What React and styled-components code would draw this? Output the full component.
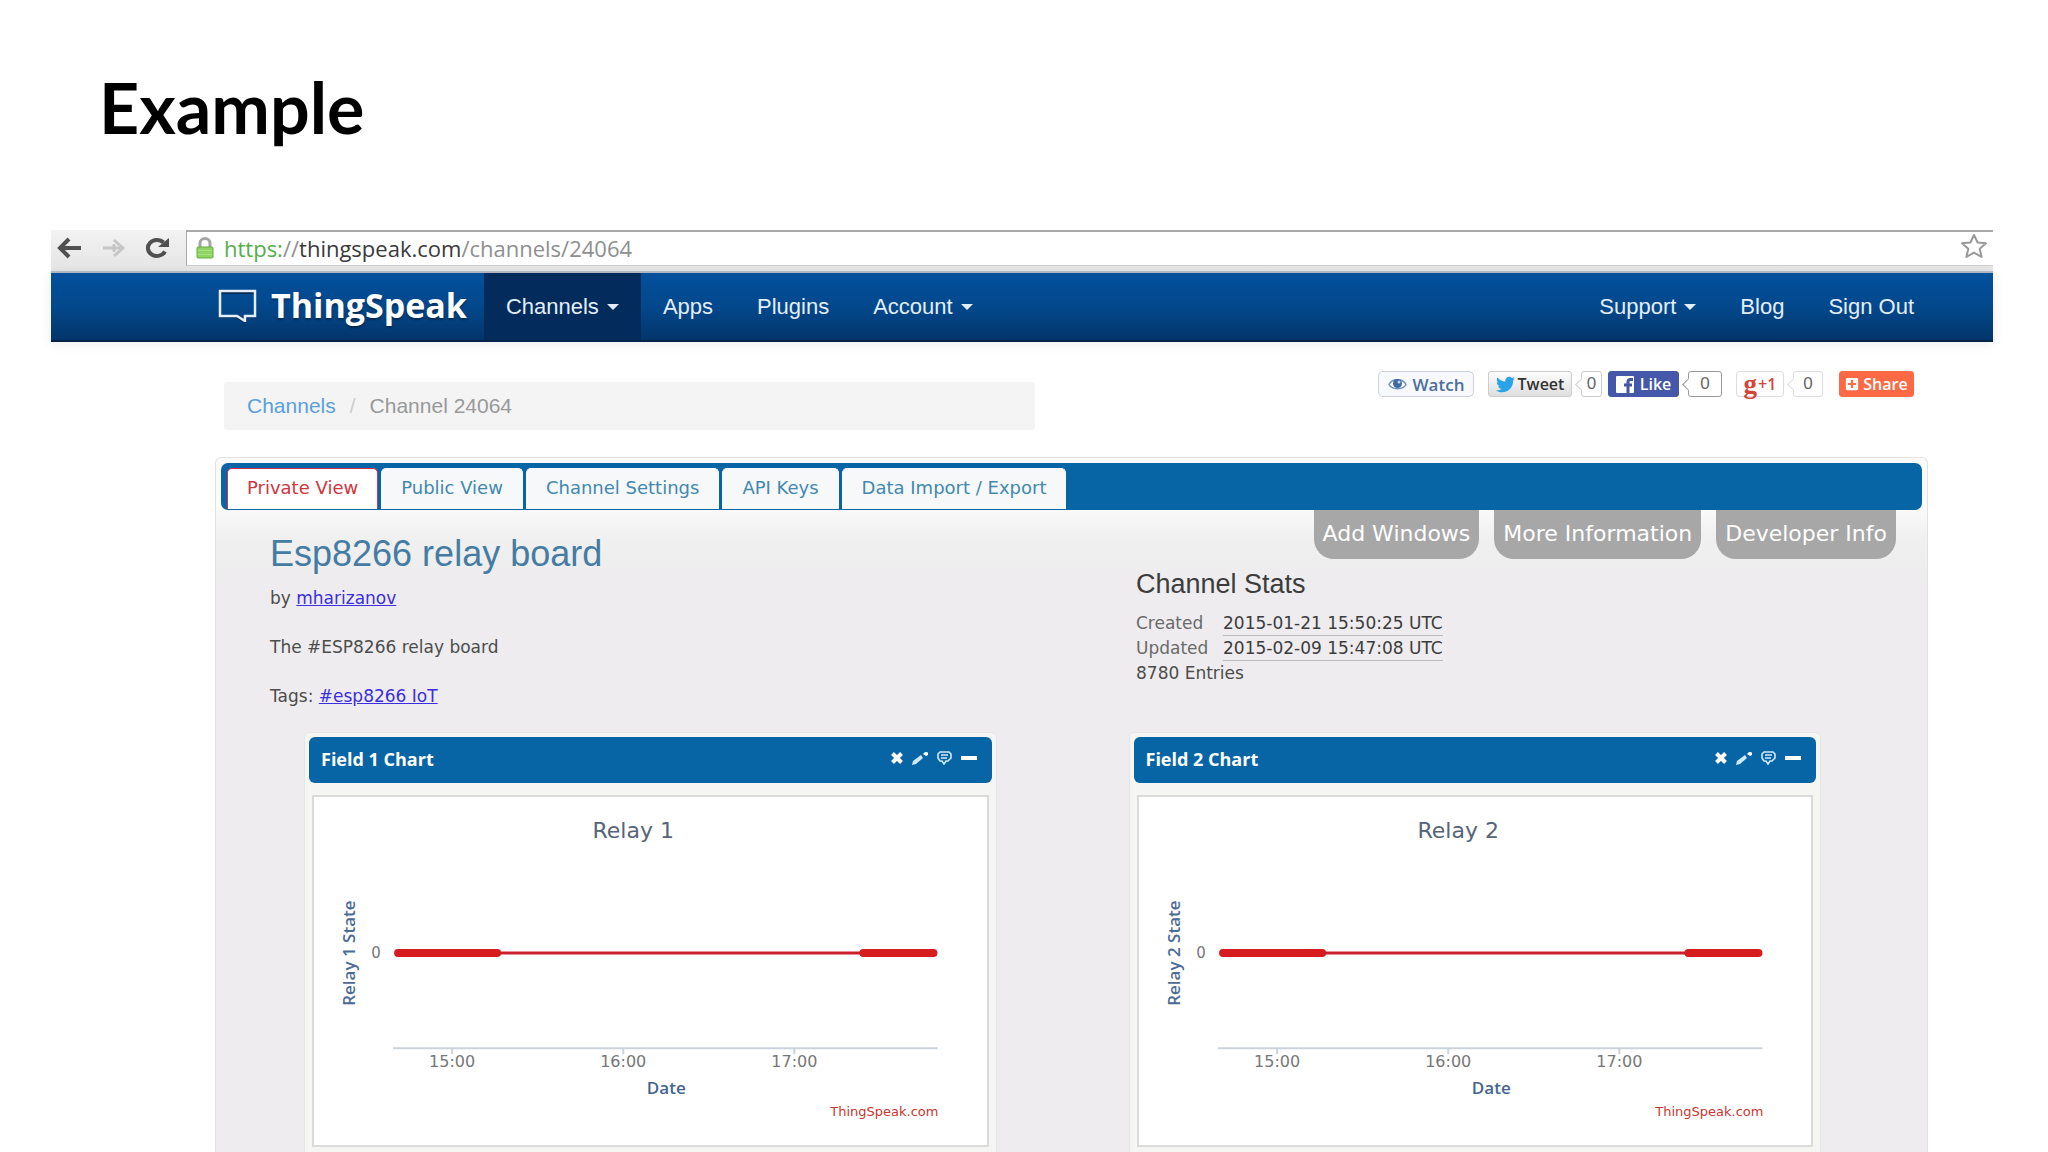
import React from "react";
import styled, { createGlobalStyle, css } from "styled-components";
import { FaTwitter, FaPlusSquare } from "react-icons/fa";

const sans = `"Liberation Sans", Arial, sans-serif`;
const humanist = `"DejaVu Sans", Verdana, sans-serif`;
const open = `"Open Sans", "Noto Sans", sans-serif`;

const GlobalStyle = createGlobalStyle`
  * {
    box-sizing: border-box;
  }
  body {
    margin: 0;
    background: #fff;
    color: #4c4c4c;
    font-family: ${humanist};
  }
  h1, h2, h3, p, ol {
    margin: 0;
    padding: 0;
  }
  button {
    border: 0;
    background: none;
    padding: 0;
    font: inherit;
    color: inherit;
    cursor: pointer;
  }
  a {
    text-decoration: none;
  }
`;

const Slide = styled.div`
  height: 100vh;
  min-height: 600px;
  overflow: hidden;
  display: flex;
  flex-direction: column;
  padding: 0 55px 0 51px;
`;

const SlideTitle = styled.h1`
  flex: none;
  height: 230px;
  padding: 66px 0 0 48px;
  font-family: Lato, sans-serif;
  font-size: 70px;
  line-height: 82px;
  font-weight: 700;
  color: #000;
`;

const BrowserBar = styled.div`
  flex: none;
  display: flex;
  height: 43px;
  background: linear-gradient(#f3f3f3, #e4e4e4);
  border-bottom: 2px solid #b5bcc6;
`;

const BrowserButtons = styled.div`
  display: flex;
  align-items: center;
  gap: 19px;
  width: 135px;
  padding: 0 0 6px 6px;

  button {
    display: flex;
  }
`;

const AddressBar = styled.div`
  flex: 1;
  display: flex;
  align-items: center;
  height: 36px;
  padding: 0 5px 2px 9px;
  background: #fff;
  border: solid #a9a9a9;
  border-width: 2px 0 1px 1px;
  border-bottom-color: #cfcfcf;
`;

const Url = styled.div`
  flex: 1;
  margin-left: 10px;
  font-family: ${open};
  font-size: 22px;
  line-height: 30px;
  color: #8f8f8f;
  outline: 0;
`;

const Scheme = styled.span`
  color: #55ae4c;
`;

const Host = styled.span`
  color: #3a3a3a;
`;

const Navbar = styled.nav`
  flex: none;
  display: flex;
  height: 69px;
  padding: 0 57px 0 167px;
  background: linear-gradient(#03509c, #03488c 50%, #03356a);
  border-bottom: 2px solid #06244a;
  box-shadow: 0 2px 12px rgba(0, 0, 0, 0.08);
`;

const Brand = styled.a`
  display: flex;
  align-items: center;
  gap: 14px;
  padding: 0 17px 4px 0;
  font-family: ${open};
  font-size: 34px;
  font-weight: 700;
  line-height: 60px;
  color: #fff;
  text-shadow: 0 2px 2px rgba(0, 0, 0, 0.35);
`;

const NavGroup = styled.div`
  display: flex;
  margin-left: ${(props) => (props.$right ? "auto" : "0")};
`;

const navItem = css`
  display: flex;
  align-items: center;
  gap: 8px;
  padding: 0 22px;
  font-family: ${sans};
  font-size: 22px;
  color: #e4eefa;
  background: ${(props) => (props.$active ? "#032c5c" : "transparent")};
`;

const NavLink = styled.a`
  ${navItem}
`;

const NavMenu = styled.button`
  ${navItem}
`;

const Caret = styled.i`
  border: solid transparent;
  border-width: 6px 6px 0;
  border-top-color: #e4eefa;
`;

const TopRow = styled.div`
  flex: none;
  display: flex;
  align-items: flex-start;
  justify-content: space-between;
  padding: 29px 79px 27px 173px;
`;

const Breadcrumb = styled.ol`
  display: flex;
  align-items: center;
  gap: 14px;
  width: 48%;
  height: 48px;
  margin-top: 11px;
  padding: 0 23px;
  list-style: none;
  border-radius: 3px;
  background: #f4f4f5;
  font-family: ${sans};
  font-size: 21px;
  color: #999;

  a {
    color: #5b9fdc;
  }
`;

const Slash = styled.li`
  color: #ccc;
`;

const ShareRow = styled.div`
  display: flex;
  align-items: center;
`;

const variants = {
  watch: css`
    background: #f7f9fc;
    border-color: #ccd2d8;
    border-radius: 5px;
    color: #4d6f9f;
    font-size: 17px;
    gap: 6px;
  `,
  tweet: css`
    background: linear-gradient(#fdfdfd, #dedede);
    border-color: #ccc;
    color: #333;
    gap: 3px;
  `,
  like: css`
    background: #4457a8;
    border-color: #4457a8;
    color: #fff;
  `,
  plus: css`
    background: #fdfdfd;
    border-color: #ddd;
    color: #d2453b;
  `,
  share: css`
    background: #fc6a45;
    border-color: #fc6a45;
    color: #fff;
    gap: 4px;
  `,
};

const ShareButton = styled.button`
  display: flex;
  align-items: center;
  justify-content: center;
  gap: 6px;
  width: ${(props) => props.$width}px;
  height: 26px;
  margin-left: ${(props) => props.$space || 0}px;
  border: 1px solid;
  border-radius: 3px;
  font-family: ${open};
  font-size: 16px;
  font-weight: 600;
  white-space: nowrap;
  ${(props) => variants[props.$kind]}
`;

const GooglePlus = styled.span`
  font-family: "Liberation Serif", serif;
  font-size: 27px;
  line-height: 20px;
  font-weight: 700;
`;

const PlusOne = styled.span`
  margin-left: -5px;
`;

const Bubble = styled.span`
  position: relative;
  width: ${(props) => props.$width}px;
  height: 26px;
  margin-left: 9px;
  border: 1px solid ${(props) => props.$line || "#ccc"};
  border-radius: 3px;
  background: #fff;
  font-family: ${sans};
  font-size: 17px;
  line-height: 24px;
  text-align: center;
  color: #666;

  &::before {
    content: "";
    position: absolute;
    left: -5px;
    top: 8px;
    width: 8px;
    height: 8px;
    background: #fff;
    border: solid ${(props) => props.$line || "#ccc"};
    border-width: 0 0 1px 1px;
    transform: rotate(45deg);
  }
`;

const Panel = styled.main`
  flex: 1;
  min-height: 0;
  margin: 0 65px 0 164px;
  padding-top: 5px;
  border: 1px solid #e2e2e0;
  border-bottom: 0;
  border-radius: 6px 6px 0 0;
  background: linear-gradient(#fafafa, #fafafa 50px, #f0f0f0 80px, #eeecee 130px);
`;

const TabBar = styled.div`
  display: flex;
  align-items: flex-end;
  gap: 3px;
  height: 47px;
  margin: 0 5px;
  padding: 0 6px 1px;
  border-radius: 7px;
  background: #0865a5;
`;

const Tab = styled.a`
  height: 41px;
  padding: 0 19px;
  border: 1px solid ${(props) => (props.$active ? "#d8304a" : "#f7f8fa")};
  border-bottom: 0;
  border-radius: 5px 5px 0 0;
  background: ${(props) => (props.$active ? "#fff" : "#f7f8fa")};
  font-size: 18px;
  line-height: 38px;
  color: ${(props) => (props.$active ? "#d0343f" : "#4189ae")};
`;

const Summary = styled.div`
  display: flex;
  justify-content: space-between;
  height: 222px;
  padding: 0 31px 0 54px;
`;

const Info = styled.section`
  padding-top: 24px;
  font-size: 17px;
  line-height: 24px;

  a {
    color: #3a2fe0;
    text-decoration: underline;
  }

  p + p {
    margin-top: 25px;
  }
`;

const ChannelName = styled.h2`
  margin-bottom: 12px;
  font-family: ${sans};
  font-size: 36px;
  line-height: 40px;
  font-weight: 400;
  color: #447ca3;
`;

const Stats = styled.section`
  width: 760px;
`;

const Actions = styled.div`
  display: flex;
  justify-content: flex-end;
  gap: 15px;
`;

const Action = styled.button`
  height: 49px;
  padding: 0 9px 2px;
  border-radius: 0 0 20px 20px;
  background: #a7a7a7;
  font-size: 22px;
  color: #fff;
`;

const StatsTitle = styled.h3`
  margin: 10px 0 12px;
  font-family: ${sans};
  font-size: 27px;
  line-height: 30px;
  font-weight: 400;
  color: #3c3c3c;
`;

const StatLine = styled.p`
  display: flex;
  font-size: 17px;
  line-height: 24px;
`;

const StatLabel = styled.span`
  width: 87px;
  color: #6a6a6a;
`;

const Time = styled.time`
  border-bottom: 1px solid #bbb;
  color: #3c3c3c;
`;

const Charts = styled.div`
  display: grid;
  grid-template-columns: 1fr 1fr;
  gap: 132px;
  padding: 0 106px 0 88px;
`;

const Card = styled.section`
  padding: 4px 4px 5px;
  border: 1px solid #e4e6e6;
  border-bottom: 0;
  border-radius: 5px 5px 0 0;
  background: #f5f5f4;
`;

const CardHeader = styled.header`
  display: flex;
  justify-content: space-between;
  height: 46px;
  padding: 0 15px 0 12px;
  border-radius: 6px;
  background: #0865a5;
  color: #fff;
`;

const CardTitle = styled.h3`
  font-family: ${open};
  font-size: 18px;
  line-height: 44px;
  font-weight: 700;
`;

const CardTools = styled.div`
  display: flex;
  align-items: center;
  gap: 9px;
  padding-bottom: 4px;

  button {
    display: flex;
  }
`;

const PlotFrame = styled.div`
  margin: 12px 3px 0;
  border: 2px solid #dadcdc;
  background: #fff;
`;

const Plot = styled.svg`
  display: block;
  width: 100%;
  font-family: ${humanist};
`;

const BackIcon = () => (
  <svg width="25" height="22" viewBox="0 0 25 22" fill="none" stroke="#505050" strokeWidth="4">
    <path d="M12 2 3 11l9 9M3 11h21" />
  </svg>
);

const ForwardIcon = () => (
  <svg width="25" height="22" viewBox="0 0 25 22" fill="none" stroke="#c6c6c6" strokeWidth="3">
    <path d="M13 3l9 8-9 8M22 11H2M13 7v8" />
  </svg>
);

const ReloadIcon = () => (
  <svg width="25" height="22" viewBox="0 0 25 22">
    <path d="M20 14.500a9 8 0 1 1-1.500-9" fill="none" stroke="#505050" strokeWidth="4" />
    <path d="M24 1v9h-11z" fill="#505050" />
  </svg>
);

const LockIcon = () => (
  <svg width="18" height="22" viewBox="0 0 18 22">
    <path d="M4 11V6a5 4.500 0 0 1 10 0v5" fill="none" stroke="#a5a5a5" strokeWidth="3" />
    <rect x="1" y="10" width="16" height="11" rx="1" fill="#8fd463" stroke="#65ad3f" />
    <path d="M2 13.500h14M2 17.500h14" stroke="#a9e284" />
  </svg>
);

const StarIcon = () => (
  <svg width="28" height="26" viewBox="0 0 28 26" fill="none" stroke="#999" strokeWidth="2">
    <path
      d="M14 2l3.600 7.500 8.400.8-6.300 5.400L21.600 24 14 19.600 6.400 24l1.900-8.300L2 10.300l8.400-.8z"
      strokeLinejoin="round"
    />
  </svg>
);

const BrandIcon = () => (
  <svg width="39" height="35" viewBox="0 0 39 35" fill="none">
    <path d="M2 6h35v24H28v6l-10-6H2z" stroke="#0a2a52" strokeWidth="2" />
    <path d="M2 4h35v25H27v5l-8-5H2z" stroke="#e6eefa" strokeWidth="2.500" />
  </svg>
);

const EyeIcon = () => (
  <svg width="19" height="14" viewBox="0 0 19 14">
    <path d="M1 7.500C4 1 15 1 18 7.500 15 13 4 13 1 7.500z" fill="#fff" stroke="#6b8fbe" strokeWidth="1.500" />
    <circle cx="9.500" cy="6.500" r="4.500" fill="#3d68a5" />
    <circle cx="11" cy="5" r="1.500" fill="#c3d5ec" />
  </svg>
);

const FacebookIcon = () => (
  <svg width="18" height="17" viewBox="0 0 18 17">
    <rect width="18" height="17" rx="1" fill="#fff" />
    <path d="M17 3.500h-2.500Q12 3.500 12 6v11M8 9h8" fill="none" stroke="#4457a8" strokeWidth="3" />
  </svg>
);

const CloseIcon = () => (
  <svg width="12" height="12" viewBox="0 0 12 12" stroke="#fff" strokeWidth="4">
    <path d="M1.500 1.500l9 9M10.500 1.500l-9 9" />
  </svg>
);

const PencilIcon = () => (
  <svg width="16" height="13" viewBox="0 0 16 13" fill="#cfe9fb">
    <path d="M0 13l1-4 8-6 2 3-7 6z" />
    <path d="M11 2l2-2h2l1 1v2l-2 1z" fill="#fff" />
  </svg>
);

const CommentIcon = () => (
  <svg width="15" height="14" viewBox="0 0 15 14" fill="none" stroke="#cfe9fb" strokeWidth="1.600">
    <path d="M3 1h9l2 2v4l-3 3H9l-2 3-2-3H3L1 7V3z" />
    <path d="M4 4h7M4 7h6" />
  </svg>
);

const MinusIcon = () => (
  <svg width="16" height="12" viewBox="0 0 16 12">
    <rect y="4" width="16" height="4" fill="#fff" />
  </svg>
);

const ticks = [
  { x: 138, label: "15:00" },
  { x: 309, label: "16:00" },
  { x: 480, label: "17:00" },
];

const FieldChart = ({ id }) => (
  <Card>
    <CardHeader>
      <CardTitle>Field {id} Chart</CardTitle>
      <CardTools>
        <button aria-label="Remove">
          <CloseIcon />
        </button>
        <button aria-label="Edit">
          <PencilIcon />
        </button>
        <button aria-label="Comment">
          <CommentIcon />
        </button>
        <button aria-label="Minimize">
          <MinusIcon />
        </button>
      </CardTools>
    </CardHeader>
    <PlotFrame>
      <Plot viewBox="0 0 672 348" role="img" aria-label={`Relay ${id}`}>
        <text x="319" y="41" fontSize="22" fill="#566478" textAnchor="middle">
          Relay {id}
        </text>
        <text
          transform="translate(41 156) rotate(-90)"
          fontFamily="Open Sans"
          fontSize="17"
          fontWeight="600"
          fill="#4c6a94"
          textAnchor="middle"
        >
          Relay {id} State
        </text>
        <text x="62" y="161" fontSize="15" fill="#777" textAnchor="middle">
          0
        </text>
        <path d="M82 156H622" stroke="#c9202c" strokeWidth="3" />
        <path d="M84 156H183M549 156H619" stroke="#d61c1f" strokeWidth="8" strokeLinecap="round" />
        <path d="M79 251H623" stroke="#cbd3da" strokeWidth="2" />
        {ticks.map(({ x, label }) => (
          <g key={label}>
            <path d={`M${x} 251v6`} stroke="#cbd3da" strokeWidth="2" />
            <text x={x} y="270" fontSize="16" fill="#777" textAnchor="middle">
              {label}
            </text>
          </g>
        ))}
        <text
          x="352"
          y="297"
          fontFamily="Open Sans"
          fontSize="17"
          fontWeight="600"
          fill="#44658f"
          textAnchor="middle"
        >
          Date
        </text>
        <text x="624" y="319" fontSize="13" fill="#c8372f" textAnchor="end">
          ThingSpeak.com
        </text>
      </Plot>
    </PlotFrame>
  </Card>
);

const tabs = [
  "Private View",
  "Public View",
  "Channel Settings",
  "API Keys",
  "Data Import / Export",
];

const App = () => (
  <>
    <GlobalStyle />
    <Slide>
      <SlideTitle>Example</SlideTitle>
      <BrowserBar>
        <BrowserButtons>
          <button aria-label="Back">
            <BackIcon />
          </button>
          <button aria-label="Forward">
            <ForwardIcon />
          </button>
          <button aria-label="Reload">
            <ReloadIcon />
          </button>
        </BrowserButtons>
        <AddressBar>
          <LockIcon />
          <Url role="textbox" aria-label="Address" contentEditable suppressContentEditableWarning>
            <Scheme>https:</Scheme>//<Host>thingspeak.com</Host>/channels/24064
          </Url>
          <button aria-label="Bookmark">
            <StarIcon />
          </button>
        </AddressBar>
      </BrowserBar>
      <Navbar>
        <Brand href="#">
          <BrandIcon />
          ThingSpeak
        </Brand>
        <NavGroup>
          <NavMenu $active>
            Channels <Caret />
          </NavMenu>
          <NavLink href="#">Apps</NavLink>
          <NavLink href="#">Plugins</NavLink>
          <NavMenu>
            Account <Caret />
          </NavMenu>
        </NavGroup>
        <NavGroup $right>
          <NavMenu>
            Support <Caret />
          </NavMenu>
          <NavLink href="#">Blog</NavLink>
          <NavLink href="#">Sign Out</NavLink>
        </NavGroup>
      </Navbar>
      <TopRow>
        <Breadcrumb>
          <li>
            <a href="#">Channels</a>
          </li>
          <Slash>/</Slash>
          <li>Channel 24064</li>
        </Breadcrumb>
        <ShareRow>
          <ShareButton $kind="watch" $width={96}>
            <EyeIcon />
            Watch
          </ShareButton>
          <ShareButton $kind="tweet" $width={84} $space={14}>
            <FaTwitter size={19} color="#2aa3e8" />
            Tweet
          </ShareButton>
          <Bubble $width={21}>0</Bubble>
          <ShareButton $kind="like" $width={71} $space={6}>
            <FacebookIcon />
            Like
          </ShareButton>
          <Bubble $width={34} $line="#999">
            0
          </Bubble>
          <ShareButton $kind="plus" $width={48} $space={14}>
            <GooglePlus>g</GooglePlus>
            <PlusOne>+1</PlusOne>
          </ShareButton>
          <Bubble $width={30} $line="#ddd">
            0
          </Bubble>
          <ShareButton $kind="share" $width={75} $space={16}>
            <FaPlusSquare size={14} />
            Share
          </ShareButton>
        </ShareRow>
      </TopRow>
      <Panel>
        <TabBar>
          {tabs.map((tab, index) => (
            <Tab href="#" key={tab} $active={index === 0}>
              {tab}
            </Tab>
          ))}
        </TabBar>
        <Summary>
          <Info>
            <ChannelName>Esp8266 relay board</ChannelName>
            <p>
              by <a href="#">mharizanov</a>
            </p>
            <p>The #ESP8266 relay board</p>
            <p>
              Tags: <a href="#">#esp8266 IoT</a>
            </p>
          </Info>
          <Stats>
            <Actions>
              <Action>Add Windows</Action>
              <Action>More Information</Action>
              <Action>Developer Info</Action>
            </Actions>
            <StatsTitle>Channel Stats</StatsTitle>
            <StatLine>
              <StatLabel>Created</StatLabel>
              <Time>2015-01-21 15:50:25 UTC</Time>
            </StatLine>
            <StatLine>
              <StatLabel>Updated</StatLabel>
              <Time>2015-02-09 15:47:08 UTC</Time>
            </StatLine>
            <StatLine>8780 Entries</StatLine>
          </Stats>
        </Summary>
        <Charts>
          <FieldChart id={1} />
          <FieldChart id={2} />
        </Charts>
      </Panel>
    </Slide>
  </>
);

export default App;
